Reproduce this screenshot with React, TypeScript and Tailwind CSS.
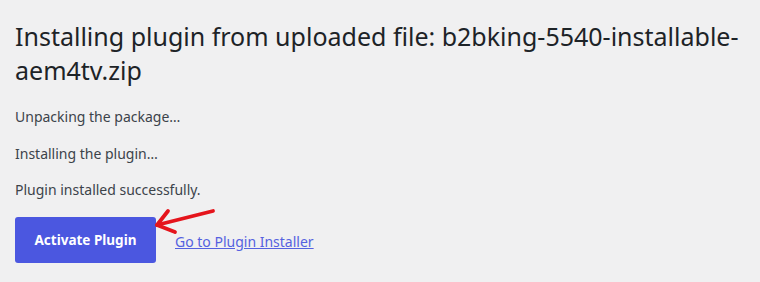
export default function App() {
  return (
    <div className="w-[760px] h-[282px] bg-[#f0f0f1] overflow-hidden pl-[15px] pr-[10px] pt-[19px] font-['Noto_Sans',sans-serif] text-[#3c434a]">
      <h1 className="text-[25px] leading-[34px] text-[#1d2327] font-normal">
        Installing plugin from uploaded file: b2bking-5540-installable-aem4tv.zip
      </h1>
      <div className="mt-[20px] text-[14px] leading-[20px] flex flex-col gap-[16.5px]">
        <p>Unpacking the package…</p>
        <p>Installing the plugin…</p>
        <p>Plugin installed successfully.</p>
      </div>
      <div className="mt-[17px] flex items-center gap-[19px] relative">
        <button className="w-[141px] h-[46px] rounded-[3px] bg-[#4b57e0] text-white text-[13.5px] font-bold">
          Activate Plugin
        </button>
        <a href="#" className="text-[14px] text-[#5561e0] underline mt-[3px]">
          Go to Plugin Installer
        </a>
        <svg className="absolute left-[124px] top-[-13px]" width="90" height="40" viewBox="0 0 90 40">
          <g stroke="#e5141c" strokeWidth="3.8" strokeLinecap="round" fill="none">
            <path d="M18 21 L74 7" />
            <path d="M29 7 L18 21 L36 28" strokeLinejoin="round" />
          </g>
        </svg>
      </div>
    </div>
  );
}
